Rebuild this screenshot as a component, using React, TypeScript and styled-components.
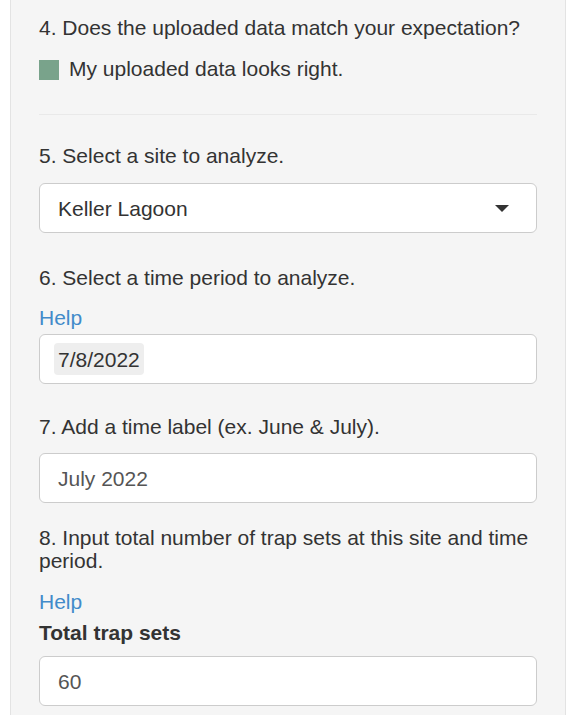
import React, { useState } from 'react';
import styled, { createGlobalStyle } from 'styled-components';

const GlobalStyle = createGlobalStyle`
  html, body {
    margin: 0;
    padding: 0;
    background: #ffffff;
  }

  body {
    font-family: 'Liberation Sans', Arial, Helvetica, sans-serif;
    color: #333333;
  }
`;

const Panel = styled.div`
  margin-left: 10px;
  width: 556px;
  box-sizing: border-box;
  min-height: 715px;
  background-color: #f5f5f5;
  border-left: 1px solid #e3e3e3;
  border-right: 1px solid #e3e3e3;
  padding: 16px 28px 0 28px;
  font-size: 21px;
  line-height: 23px;
`;

const Label = styled.div<{ $mt?: number; $bold?: boolean }>`
  margin-top: ${(p) => p.$mt ?? 0}px;
  font-weight: ${(p) => (p.$bold ? 700 : 400)};
`;

const HelpLink = styled.a<{ $mt: number }>`
  display: block;
  margin-top: ${(p) => p.$mt}px;
  color: #428bca;
  text-decoration: none;
  cursor: pointer;
`;

const CheckRow = styled.label`
  display: flex;
  align-items: flex-start;
  gap: 10px;
  margin-top: 18px;
  cursor: pointer;
`;

const CheckSquare = styled.span<{ $checked: boolean }>`
  flex: none;
  width: 20px;
  height: 20px;
  margin-top: 3px;
  background-color: ${(p) => (p.$checked ? '#79a38b' : '#ffffff')};
`;

const Divider = styled.hr`
  margin: 34px 0 0 0;
  border: 0;
  border-top: 1px solid #e9e9e9;
`;

const Field = styled.div<{ $mt: number; $color?: string; $pl?: number }>`
  display: flex;
  align-items: center;
  justify-content: space-between;
  box-sizing: border-box;
  margin-top: ${(p) => p.$mt}px;
  height: 50px;
  padding: 0 27px 0 ${(p) => p.$pl ?? 18}px;
  background-color: #ffffff;
  border: 1px solid #cccccc;
  border-radius: 6px;
  color: ${(p) => p.$color ?? '#555555'};
`;

const Caret = styled.span`
  width: 0;
  height: 0;
  border-left: 7px solid transparent;
  border-right: 7px solid transparent;
  border-top: 7px solid #333333;
`;

const DateChip = styled.span`
  display: inline-flex;
  align-items: center;
  height: 32px;
  padding: 0 4px;
  background-color: #eeeeee;
  border-radius: 4px;
  color: #333333;
`;

const App = () => {
  const [checked, setChecked] = useState(true);

  return (
    <>
      <GlobalStyle />
      <Panel>
        <Label>4. Does the uploaded data match your expectation?</Label>
        <CheckRow onClick={() => setChecked((c) => !c)}>
          <CheckSquare $checked={checked} />
          <span>My uploaded data looks right.</span>
        </CheckRow>

        <Divider />

        <Label $mt={29}>5. Select a site to analyze.</Label>
        <Field $mt={16} $color="#333333">
          <span>Keller Lagoon</span>
          <Caret />
        </Field>

        <Label $mt={33}>6. Select a time period to analyze.</Label>
        <HelpLink $mt={17}>Help</HelpLink>
        <Field $mt={5} $pl={14}>
          <DateChip>7/8/2022</DateChip>
        </Field>

        <Label $mt={31}>7. Add a time label (ex. June &amp; July).</Label>
        <Field $mt={15}>
          <span>July 2022</span>
        </Field>

        <Label $mt={23}>
          8. Input total number of trap sets at this site and time period.
        </Label>
        <HelpLink $mt={18}>Help</HelpLink>
        <Label $mt={8} $bold>
          Total trap sets
        </Label>
        <Field $mt={12}>
          <span>60</span>
        </Field>
      </Panel>
    </>
  );
};

export default App;
